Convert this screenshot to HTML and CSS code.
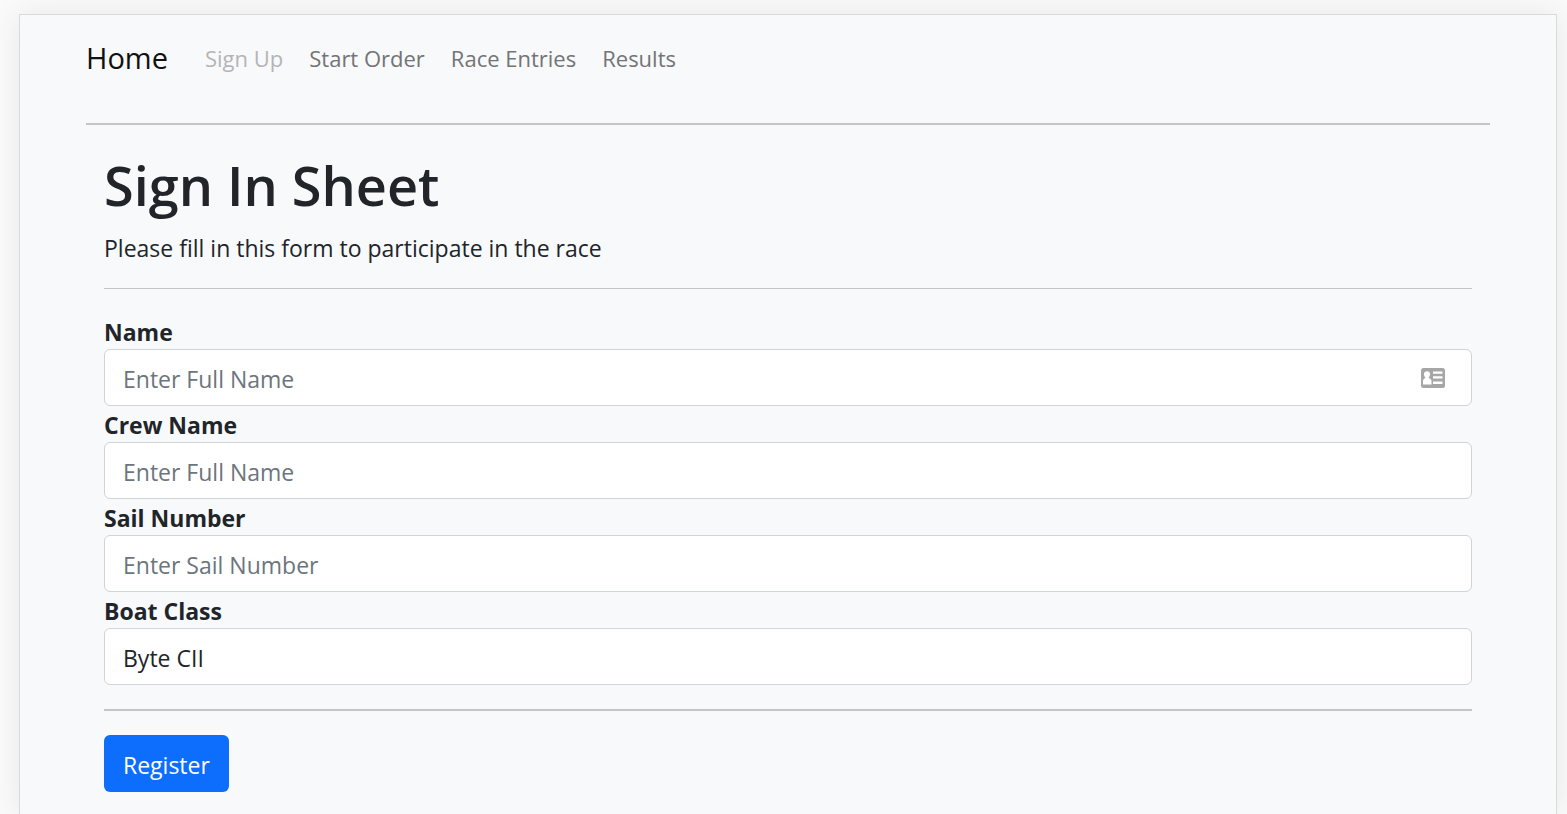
FILE: index.html
```html
<!DOCTYPE html>
<html lang="en">
<head>
<meta charset="utf-8">
<title>Sign In Sheet</title>
<link rel="stylesheet" href="styles.css">
</head>
<body>
<div class="page">
  <nav class="navbar">
    <a class="brand" href="#">Home</a>
    <a class="nav-link disabled" href="#" aria-disabled="true">Sign Up</a>
    <a class="nav-link" href="#">Start Order</a>
    <a class="nav-link" href="#">Race Entries</a>
    <a class="nav-link" href="#">Results</a>
  </nav>
  <hr class="rule thick">
  <form class="sheet">
    <h1 class="title">Sign In Sheet</h1>
    <p class="lead">Please fill in this form to participate in the race</p>
    <hr class="rule">
    <div class="fields">
      <label class="label" for="name">Name</label>
      <div class="field">
        <input class="control" id="name" type="text" placeholder="Enter Full Name">
        <svg class="card-icon" viewBox="0 0 24 20" aria-hidden="true">
          <rect width="24" height="20" rx="2.500" fill="#a6a6a6"/>
          <path d="M6 3.200c2 0 3 1.300 3 3 0 1.400-.6 2.300-1.300 3v.8c1.700.5 2.800 1.500 2.800 3.500V16.500h-8.500v-3c0-2 .8-3 2.300-3.500v-.8C3.500 8.500 3 7.600 3 6.200c0-1.700 1-3 3-3z" fill="#fff"/>
          <path d="M12 3.500h9.500v2.300H12zM12 8.200h9.500v2.300H12zM12 13.500h9.500v2.500H12z" fill="#fff"/>
        </svg>
      </div>
      <label class="label" for="crew">Crew Name</label>
      <input class="control" id="crew" type="text" placeholder="Enter Full Name">
      <label class="label" for="sail">Sail Number</label>
      <input class="control" id="sail" type="text" placeholder="Enter Sail Number">
      <label class="label" for="boat">Boat Class</label>
      <select class="control" id="boat"><option>Byte CII</option></select>
    </div>
    <hr class="rule thick">
    <button class="button" type="submit">Register</button>
  </form>
</div>
</body>
</html>
```
FILE: styles.css
```css
* { box-sizing: border-box; }
body {
  margin: 0;
  padding: 14px 10px 0 19px;
  background: #fafafa;
  color: #212529;
  font: 23px/36px "Segoe UI", "Open Sans", "Noto Sans", sans-serif;
}
.page {
  min-height: calc(100vh - 14px);
  padding: 12px 66px 22px;
  border: 1px solid #d9dadb;
  border-bottom: 0;
  background: #f8f9fb;
  box-shadow: 0 0 30px rgba(0, 0, 0, 0.08);
}
.navbar {
  display: flex;
  align-items: center;
  height: 62px;
}
.brand {
  margin-right: 24px;
  color: #111;
  font-size: 29px;
  text-decoration: none;
}
.nav-link {
  padding: 0 13px;
  color: #737475;
  font-size: 22px;
  text-decoration: none;
}
.nav-link.disabled { color: #b4b5b6; }
.rule {
  height: 1px;
  margin: 24px 0;
  border: 0;
  background: #c4c5c7;
}
.rule.thick { height: 2px; }
.navbar + .rule { margin: 34px 0 0; }
.sheet { padding: 24px 18px 0; }
.title {
  margin: 0 0 10px;
  font-size: 54px;
  font-weight: 600;
  line-height: 72px;
}
.lead {
  margin: 0;
  line-height: 34px;
}
.lead + .rule { margin-top: 23px; }
.label {
  display: block;
  padding-top: 2px;
  font-weight: 700;
  line-height: 34px;
}
.field { position: relative; }
.control {
  display: block;
  width: 100%;
  height: 57px;
  padding: 3px 18px 0;
  border: 1px solid #ced4da;
  border-radius: 6px;
  background: #fff;
  color: #212529;
  font: inherit;
  appearance: none;
}
.control::placeholder { color: #6c757d; opacity: 1; }
.card-icon {
  position: absolute;
  top: 19px;
  right: 27px;
  width: 24px;
  height: 20px;
}
.button {
  display: block;
  height: 57px;
  padding: 2px 19px 0;
  border: 0;
  border-radius: 6px;
  background: #0d6efd;
  color: #fff;
  font: inherit;
}
```
